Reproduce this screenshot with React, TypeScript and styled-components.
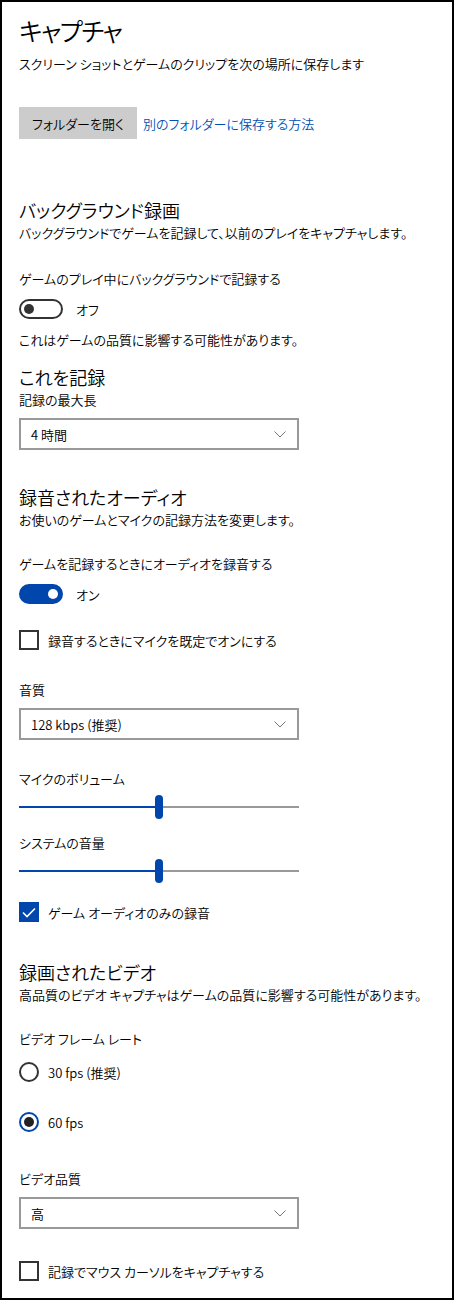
import React from 'react'
import styled, { createGlobalStyle } from 'styled-components'

const accent = '#0046ad'

const GlobalStyle = createGlobalStyle`
  html, body {
    margin: 0;
    padding: 0;
    background: #fff;
  }
  body {
    font-family: 'Noto Sans CJK JP', 'Noto Sans', sans-serif;
    font-feature-settings: 'palt';
    color: #000;
  }
`

const Page = styled.div`
  box-sizing: border-box;
  width: 454px;
  height: 1300px;
  border: 2px solid #000;
  padding: 8px 17px 0 17px;
  display: flex;
  flex-direction: column;
  align-items: flex-start;
  white-space: nowrap;
`

const PageTitle = styled.h1`
  margin: 0;
  font-size: 25px;
  line-height: 40px;
  letter-spacing: -1.5px;
  font-weight: 350;
`

const SectionTitle = styled.h2<{ $top: number }>`
  margin: ${(p) => p.$top}px 0 0 0;
  font-size: 18px;
  line-height: 26px;
  font-weight: 350;
`

const Text = styled.p<{ $top?: number }>`
  margin: ${(p) => p.$top ?? 0}px 0 0 0;
  font-size: 13px;
  line-height: 20px;
  font-weight: 350;
`

const Actions = styled.div`
  display: flex;
  align-items: center;
  gap: 6px;
  margin-top: 33px;
`

const Button = styled.button`
  width: 118px;
  height: 32px;
  padding: 0;
  border: none;
  background: #ccc;
  font-family: inherit;
  font-feature-settings: 'palt';
  font-size: 13px;
  font-weight: 350;
  color: #000;
`

const Link = styled.a`
  font-size: 13px;
  font-weight: 350;
  color: #0050b4;
  text-decoration: none;
`

const ToggleRow = styled.div<{ $top: number }>`
  display: flex;
  align-items: center;
  gap: 13px;
  margin-top: ${(p) => p.$top}px;
  height: 20px;
  font-size: 13px;
  font-weight: 350;
`

const Track = styled.div<{ $on: boolean }>`
  box-sizing: border-box;
  width: 44px;
  height: 20px;
  border-radius: 10px;
  border: 2px solid ${(p) => (p.$on ? accent : '#333')};
  background: ${(p) => (p.$on ? accent : '#fff')};
  display: flex;
  align-items: center;
  justify-content: ${(p) => (p.$on ? 'flex-end' : 'flex-start')};
  padding: 0 3px;
`

const Knob = styled.div<{ $on: boolean }>`
  width: 10px;
  height: 10px;
  border-radius: 50%;
  background: ${(p) => (p.$on ? '#fff' : '#333')};
`

const Toggle = ({ on, label, top }: { on: boolean; label: string; top: number }) => (
  <ToggleRow $top={top}>
    <Track $on={on}>
      <Knob $on={on} />
    </Track>
    {label}
  </ToggleRow>
)

const CheckRow = styled.label<{ $top: number }>`
  display: flex;
  align-items: center;
  gap: 9px;
  height: 20px;
  margin-top: ${(p) => p.$top}px;
  font-size: 13px;
  font-weight: 350;
`

const Box = styled.span<{ $checked: boolean }>`
  box-sizing: border-box;
  width: 20px;
  height: 20px;
  border: 2px solid ${(p) => (p.$checked ? accent : '#333')};
  background: ${(p) => (p.$checked ? accent : '#fff')};
  display: flex;
  align-items: center;
  justify-content: center;
`

const Checkbox = ({ checked, label, top }: { checked: boolean; label: string; top: number }) => (
  <CheckRow $top={top}>
    <Box $checked={checked}>
      {checked && (
        <svg width='14' height='11' viewBox='0 0 14 11'>
          <path d='M1 5.5 L5 9.5 L13 1.5' fill='none' stroke='#fff' strokeWidth='1.6' />
        </svg>
      )}
    </Box>
    {label}
  </CheckRow>
)

const Ring = styled.span<{ $checked: boolean }>`
  box-sizing: border-box;
  width: 20px;
  height: 20px;
  border-radius: 50%;
  border: 2px solid ${(p) => (p.$checked ? accent : '#333')};
  display: flex;
  align-items: center;
  justify-content: center;
`

const Dot = styled.span`
  width: 10px;
  height: 10px;
  border-radius: 50%;
  background: #222;
`

const Radio = ({ checked, label, top }: { checked: boolean; label: string; top: number }) => (
  <CheckRow $top={top}>
    <Ring $checked={checked}>{checked && <Dot />}</Ring>
    {label}
  </CheckRow>
)

const Select = styled.div`
  box-sizing: border-box;
  margin-top: 8px;
  width: 280px;
  height: 32px;
  border: 2px solid #999;
  display: flex;
  align-items: center;
  justify-content: space-between;
  padding: 0 11px 0 10px;
  font-size: 13px;
  font-weight: 350;
`

const Dropdown = ({ value }: { value: string }) => (
  <Select>
    <span>{value}</span>
    <svg width='12' height='7' viewBox='0 0 12 7'>
      <path d='M0.5 0.5 L6 6 L11.5 0.5' fill='none' stroke='#777' strokeWidth='1' />
    </svg>
  </Select>
)

const SliderBox = styled.div`
  margin-top: 6px;
  width: 280px;
  height: 24px;
  display: flex;
  align-items: center;
`

const Fill = styled.div`
  height: 2px;
  background: ${accent};
`

const Rest = styled.div`
  flex: 1;
  height: 2px;
  background: #999;
`

const Thumb = styled.div`
  width: 8px;
  height: 24px;
  border-radius: 4px;
  background: ${accent};
`

const Slider = ({ value }: { value: number }) => (
  <SliderBox>
    <Fill style={{ width: `${value * 272}px` }} />
    <Thumb />
    <Rest />
  </SliderBox>
)

export default function App() {
  return (
    <>
      <GlobalStyle />
      <Page>
        <PageTitle>キャプチャ</PageTitle>
        <Text $top={4}>スクリーン ショットとゲームのクリップを次の場所に保存します</Text>
        <Actions>
          <Button>フォルダーを開く</Button>
          <Link href='#'>別のフォルダーに保存する方法</Link>
        </Actions>

        <SectionTitle $top={58}>バックグラウンド録画</SectionTitle>
        <Text>バックグラウンドでゲームを記録して、以前のプレイをキャプチャします。</Text>
        <Text $top={26}>ゲームのプレイ中にバックグラウンドで記録する</Text>
        <Toggle on={false} label='オフ' top={10} />
        <Text $top={11}>これはゲームの品質に影響する可能性があります。</Text>

        <SectionTitle $top={14}>これを記録</SectionTitle>
        <Text>記録の最大長</Text>
        <Dropdown value='4 時間' />

        <SectionTitle $top={34}>録音されたオーディオ</SectionTitle>
        <Text>お使いのゲームとマイクの記録方法を変更します。</Text>
        <Text $top={24}>ゲームを記録するときにオーディオを録音する</Text>
        <Toggle on label='オン' top={10} />
        <Checkbox checked={false} label='録音するときにマイクを既定でオンにする' top={26} />
        <Text $top={30}>音質</Text>
        <Dropdown value='128 kbps (推奨)' />
        <Text $top={29}>マイクのボリューム</Text>
        <Slider value={0.5} />
        <Text $top={14}>システムの音量</Text>
        <Slider value={0.5} />
        <Checkbox checked label='ゲーム オーディオのみの録音' top={19} />

        <SectionTitle $top={37}>録画されたビデオ</SectionTitle>
        <Text>高品質のビデオ キャプチャはゲームの品質に影響する可能性があります。</Text>
        <Text $top={24}>ビデオ フレーム レート</Text>
        <Radio checked={false} label='30 fps (推奨)' top={13} />
        <Radio checked label='60 fps' top={30} />
        <Text $top={37}>ビデオ品質</Text>
        <Dropdown value='高' />
        <Checkbox checked={false} label='記録でマウス カーソルをキャプチャする' top={32} />
      </Page>
    </>
  )
}
